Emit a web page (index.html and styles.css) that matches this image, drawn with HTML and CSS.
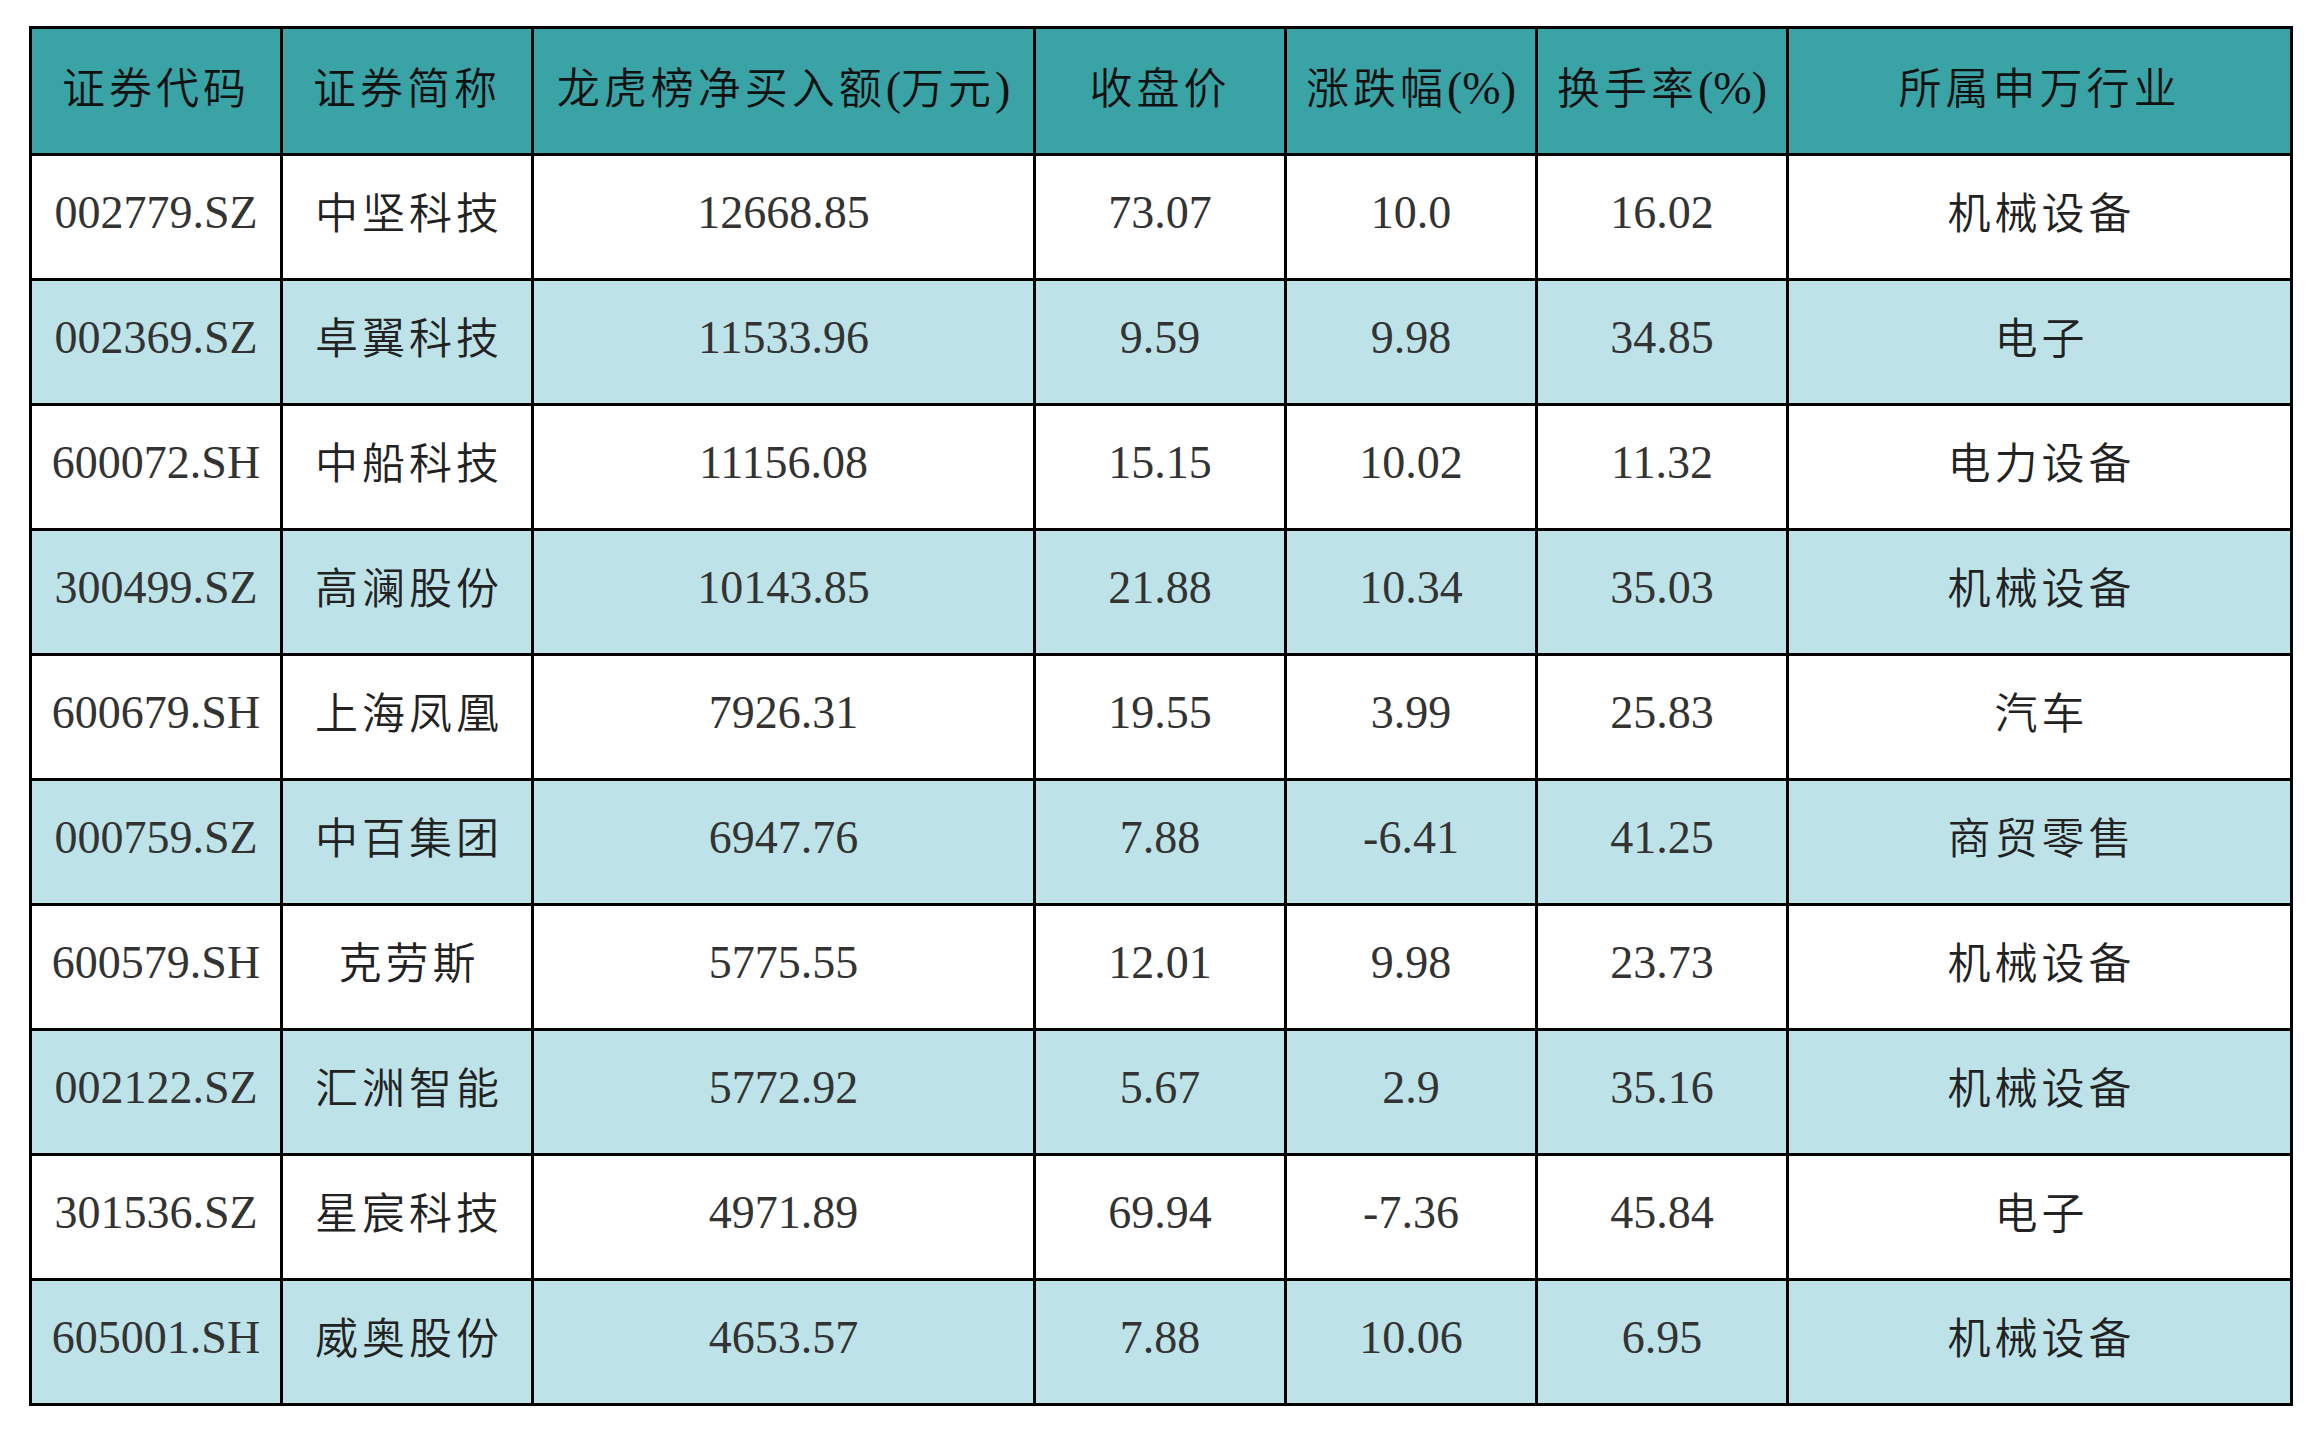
FILE: index.html
```html
<!DOCTYPE html>
<html lang="zh-CN">
<head>
<meta charset="utf-8">
<title>龙虎榜</title>
<link rel="stylesheet" href="styles.css">
</head>
<body>
<div class="wrap">
<table class="board">
  <colgroup>
    <col class="c1"><col class="c1"><col class="c2"><col class="c1"><col class="c1"><col class="c1"><col class="c3">
  </colgroup>
  <thead>
    <tr>
      <th><span class="cjk">证券代码</span></th>
      <th><span class="cjk">证券简称</span></th>
      <th><span class="cjk">龙虎榜净买入额</span><span class="lat">(</span><span class="cjk">万元</span><span class="lat">)</span></th>
      <th><span class="cjk">收盘价</span></th>
      <th><span class="cjk">涨跌幅</span><span class="lat">(%)</span></th>
      <th><span class="cjk">换手率</span><span class="lat">(%)</span></th>
      <th><span class="cjk">所属申万行业</span></th>
    </tr>
  </thead>
  <tbody>
    <tr><td class="num">002779.SZ</td><td class="cjk">中坚科技</td><td class="num">12668.85</td><td class="num">73.07</td><td class="num">10.0</td><td class="num">16.02</td><td class="cjk">机械设备</td></tr>
    <tr class="alt"><td class="num">002369.SZ</td><td class="cjk">卓翼科技</td><td class="num">11533.96</td><td class="num">9.59</td><td class="num">9.98</td><td class="num">34.85</td><td class="cjk">电子</td></tr>
    <tr><td class="num">600072.SH</td><td class="cjk">中船科技</td><td class="num">11156.08</td><td class="num">15.15</td><td class="num">10.02</td><td class="num">11.32</td><td class="cjk">电力设备</td></tr>
    <tr class="alt"><td class="num">300499.SZ</td><td class="cjk">高澜股份</td><td class="num">10143.85</td><td class="num">21.88</td><td class="num">10.34</td><td class="num">35.03</td><td class="cjk">机械设备</td></tr>
    <tr><td class="num">600679.SH</td><td class="cjk">上海凤凰</td><td class="num">7926.31</td><td class="num">19.55</td><td class="num">3.99</td><td class="num">25.83</td><td class="cjk">汽车</td></tr>
    <tr class="alt"><td class="num">000759.SZ</td><td class="cjk">中百集团</td><td class="num">6947.76</td><td class="num">7.88</td><td class="num">-6.41</td><td class="num">41.25</td><td class="cjk">商贸零售</td></tr>
    <tr><td class="num">600579.SH</td><td class="cjk">克劳斯</td><td class="num">5775.55</td><td class="num">12.01</td><td class="num">9.98</td><td class="num">23.73</td><td class="cjk">机械设备</td></tr>
    <tr class="alt"><td class="num">002122.SZ</td><td class="cjk">汇洲智能</td><td class="num">5772.92</td><td class="num">5.67</td><td class="num">2.9</td><td class="num">35.16</td><td class="cjk">机械设备</td></tr>
    <tr><td class="num">301536.SZ</td><td class="cjk">星宸科技</td><td class="num">4971.89</td><td class="num">69.94</td><td class="num">-7.36</td><td class="num">45.84</td><td class="cjk">电子</td></tr>
    <tr class="alt"><td class="num">605001.SH</td><td class="cjk">威奥股份</td><td class="num">4653.57</td><td class="num">7.88</td><td class="num">10.06</td><td class="num">6.95</td><td class="cjk">机械设备</td></tr>
  </tbody>
</table>
</div>
</body>
</html>
```
FILE: styles.css
```css
html, body {
  margin: 0;
  padding: 0;
  background: #ffffff;
}
.wrap {
  padding: 26px 0 0 29px;
}
.board {
  border-collapse: collapse;
  table-layout: fixed;
  width: 2264px;
  border: 3px solid #000;
}
.c1 { width: 251px; }
.c2 { width: 502px; }
.c3 { width: 504px; }
.board th, .board td {
  border: 3px solid #000;
  text-align: center;
  vertical-align: middle;
  padding: 0;
  white-space: nowrap;
}
.board thead th {
  background: #3aa3a6;
  height: 112px;
  padding-bottom: 12px;
  color: #111;
  font-weight: normal;
}
.board tbody td {
  height: 112px;
  padding-bottom: 10px;
  color: #333;
  background: #ffffff;
}
.board tbody tr.alt td {
  background: #bde3e9;
}
.cjk {
  font-family: "Noto Sans CJK SC", "Noto Sans CJK TC", sans-serif;
  font-size: 43px;
  font-weight: 350;
  letter-spacing: 4px;
}
.board tbody td.cjk {
  color: #222;
  padding-left: 4px;
  height: 108px;
  padding-bottom: 14px;
}
.lat {
  font-family: "Liberation Serif", serif;
  font-size: 46px;
  font-weight: normal;
}
.num {
  font-family: "Liberation Serif", serif;
  font-size: 46px;
}
```
